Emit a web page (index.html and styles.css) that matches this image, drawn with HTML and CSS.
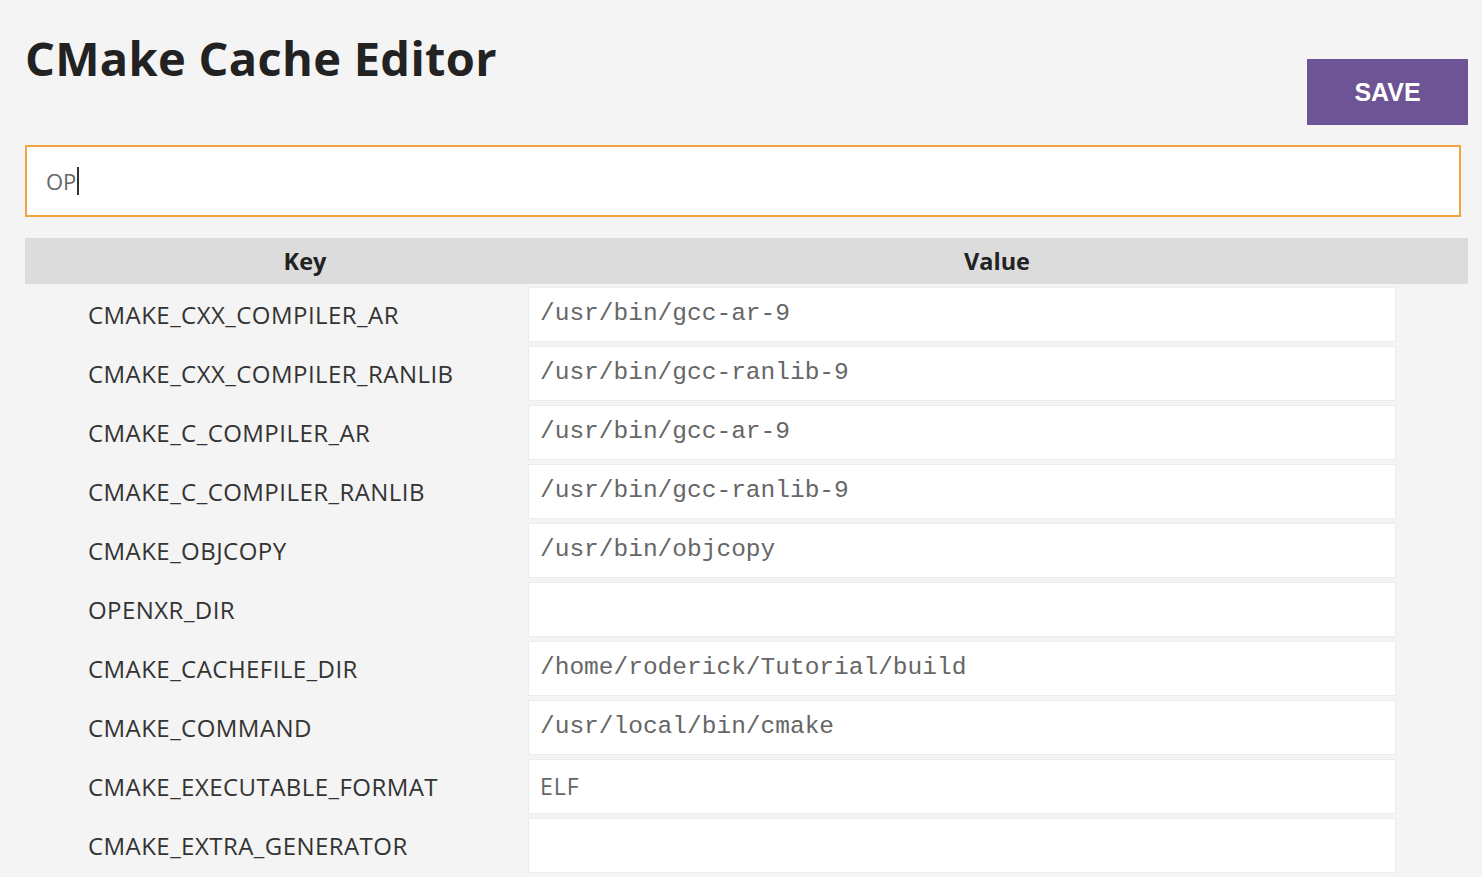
FILE: index.html
```html
<!DOCTYPE html>
<html lang="en">
<head>
<meta charset="utf-8">
<title>CMake Cache Editor</title>
<link rel="stylesheet" href="styles.css">
</head>
<body>
<main class="page">
  <header class="top">
    <h1 class="title">CMake Cache Editor</h1>
    <button class="save" type="button">SAVE</button>
  </header>
  <div class="search"><span class="search-text">OP</span><span class="caret"></span></div>
  <section class="table">
    <div class="thead">
      <div class="th th-key">Key</div>
      <div class="th th-value">Value</div>
    </div>
    <div class="tbody">
      <div class="row"><div class="key">CMAKE_CXX_COMPILER_AR</div><div class="value">/usr/bin/gcc-ar-9</div></div>
      <div class="row"><div class="key">CMAKE_CXX_COMPILER_RANLIB</div><div class="value">/usr/bin/gcc-ranlib-9</div></div>
      <div class="row"><div class="key">CMAKE_C_COMPILER_AR</div><div class="value">/usr/bin/gcc-ar-9</div></div>
      <div class="row"><div class="key">CMAKE_C_COMPILER_RANLIB</div><div class="value">/usr/bin/gcc-ranlib-9</div></div>
      <div class="row"><div class="key">CMAKE_OBJCOPY</div><div class="value">/usr/bin/objcopy</div></div>
      <div class="row"><div class="key">OPENXR_DIR</div><div class="value"></div></div>
      <div class="row"><div class="key">CMAKE_CACHEFILE_DIR</div><div class="value">/home/roderick/Tutorial/build</div></div>
      <div class="row"><div class="key">CMAKE_COMMAND</div><div class="value">/usr/local/bin/cmake</div></div>
      <div class="row"><div class="key">CMAKE_EXECUTABLE_FORMAT</div><div class="value value-sans">ELF</div></div>
      <div class="row"><div class="key">CMAKE_EXTRA_GENERATOR</div><div class="value"></div></div>
    </div>
  </section>
</main>
</body>
</html>
```
FILE: styles.css
```css
html, body {
  margin: 0;
  padding: 0;
  background: #f4f4f4;
  overflow: hidden;
  height: 100%;
}
body {
  font-family: "Open Sans", "Noto Sans", sans-serif;
  color: #333;
}
.page {
  padding: 0 14px 0 25px;
}
.top {
  display: flex;
  justify-content: space-between;
  align-items: flex-start;
  height: 145px;
}
.title {
  margin: 0;
  padding-top: 30px;
  font-size: 47px;
  line-height: 56px;
  font-weight: 700;
  color: #222;
  letter-spacing: 0.3px;
}
.save {
  margin-top: 59px;
  width: 161px;
  height: 66px;
  border: none;
  background: #6c5495;
  color: #fff;
  font-family: "Liberation Sans", Arial, sans-serif;
  font-weight: 700;
  font-size: 25px;
  padding: 0;
}
.search {
  box-sizing: border-box;
  height: 72px;
  margin-right: 7px;
  border: 2px solid #f2a444;
  background: #fff;
  display: flex;
  align-items: center;
  padding-left: 19px;
}
.search-text {
  font-size: 22px;
  color: #666;
}
.caret {
  width: 2px;
  height: 28px;
  background: #333;
  margin-left: 1px;
}
.table {
  margin-top: 21px;
}
.thead {
  display: flex;
  height: 46px;
  background: #dcdcdc;
  align-items: center;
}
.th {
  font-weight: 700;
  font-size: 23.5px;
  color: #222;
  text-align: center;
}
.th-key { width: 560px; }
.th-value { width: 824px; }
.tbody {
  display: flex;
  flex-direction: column;
  gap: 4px;
  padding-top: 3px;
}
.row {
  display: flex;
  align-items: center;
  height: 55px;
}
.key {
  box-sizing: border-box;
  width: 503px;
  padding-left: 63px;
  font-size: 24px;
  letter-spacing: 0.45px;
  color: #333;
}
.value {
  box-sizing: border-box;
  width: 868px;
  height: 55px;
  background: #fff;
  border: 1px solid #ececec;
  display: flex;
  align-items: center;
  padding-left: 11px;
  font-family: "Liberation Mono", monospace;
  font-size: 24.5px;
  color: #666;
  padding-bottom: 2px;
}
.value-sans {
  font-family: "Open Sans", "Noto Sans", sans-serif;
  font-size: 23px;
  letter-spacing: 1px;
}
```
